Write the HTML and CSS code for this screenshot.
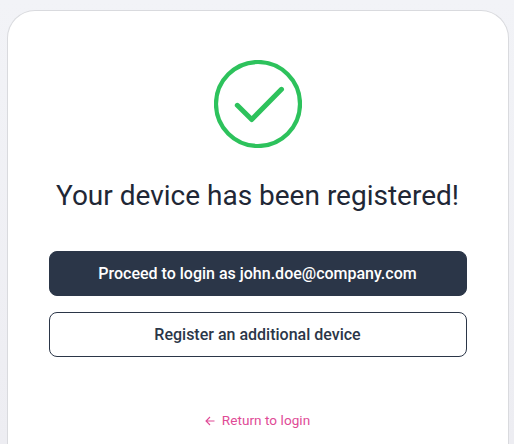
FILE: index.html
```html
<!DOCTYPE html>
<html lang="en">
<head>
<meta charset="utf-8">
<title>Device registered</title>
<link rel="stylesheet" href="styles.css">
</head>
<body>
<main class="card">
<svg class="success" viewBox="0 0 88 88" fill="none" aria-hidden="true"><circle cx="44" cy="44" r="42"/><path d="M23.300 45.300 37.700 59.500 67.500 29.300"/></svg>
<h1 class="title">Your device has been registered!</h1>
<div class="actions">
<button class="button primary">Proceed to login as john.doe@company.com</button>
<button class="button secondary">Register an additional device</button>
</div>
<a class="return" href="#"><svg class="arrow" viewBox="0 0 10 10" fill="none" aria-hidden="true"><path d="M9.500 5H1M5 1 1 5 5 9"/></svg><span>Return to login</span></a>
</main>
</body>
</html>
```
FILE: styles.css
```css
* { box-sizing: border-box; }
body { display: flow-root; margin: 0; height: 444px; background: linear-gradient(#f2f3f7, #ededf2); font-family: Roboto, sans-serif; }
.card { display: flex; flex-direction: column; align-items: center; width: 502px; height: 434px; margin: 10px 0 0 7px; padding: 49px 41px 0; border: 1px solid #d9dade; border-bottom: 0; border-radius: 28px 28px 0 0; background: #fff; }
.success { width: 88px; height: 88px; flex-shrink: 0; stroke: #2dc25c; stroke-width: 4.2; }
.success path { stroke-width: 5; stroke-linecap: round; stroke-linejoin: round; }
.title { margin: 30px 1px 0 0; font-size: 28px; line-height: 36px; font-weight: 400; color: #212735; white-space: nowrap; }
.actions { display: grid; gap: 16px; width: 418px; margin-top: 37px; }
.button { height: 45px; padding: 0 1px 0 0; border: 1px solid #2b3648; border-radius: 8px; font: 500 16px/24px Roboto, sans-serif; }
.primary { background: #2b3648; color: #fff; }
.secondary { background: #fff; color: #2b3648; }
.return { display: flex; align-items: center; gap: 7px; margin: 53px 1px 0 0; color: #e04b96; font-size: 13.6px; line-height: 20px; letter-spacing: 0.03px; text-decoration: none; }
.arrow { width: 10px; height: 10px; margin-top: 1px; stroke: currentColor; stroke-width: 1.1; }
```
